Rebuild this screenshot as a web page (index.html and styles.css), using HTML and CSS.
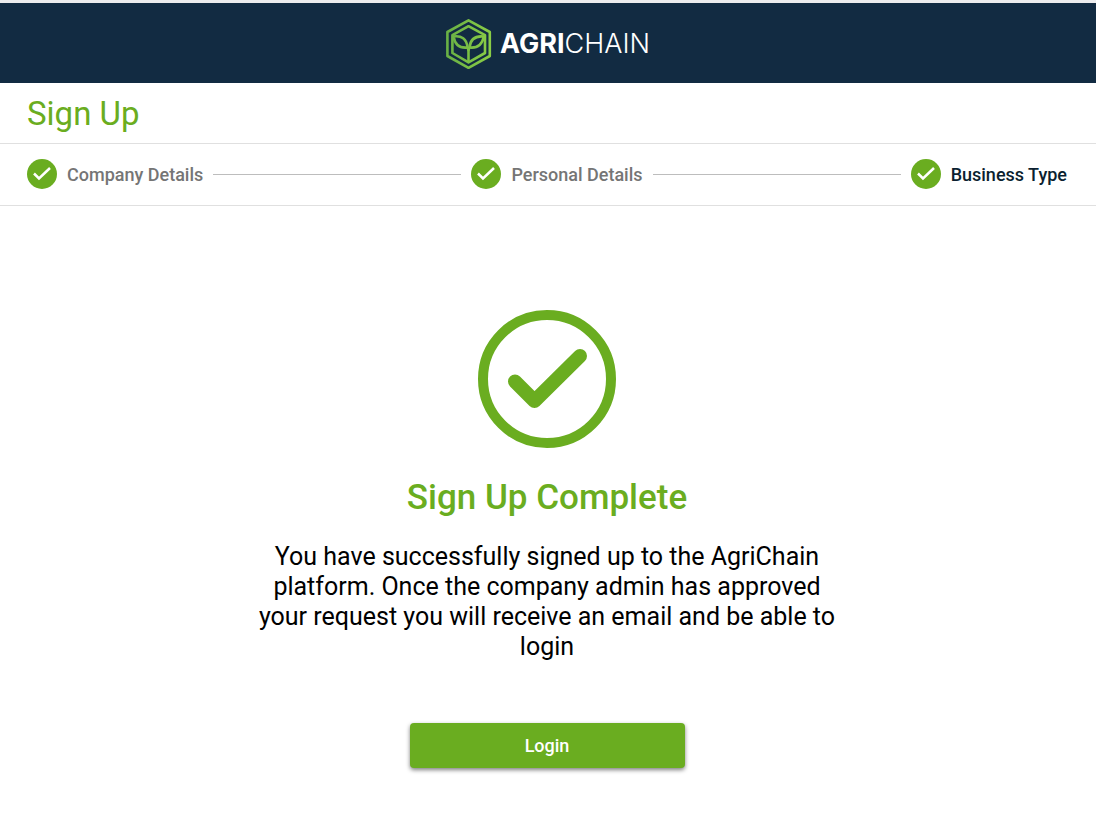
FILE: index.html
```html
<!DOCTYPE html>
<html lang="en">
  <head>
    <meta charset="utf-8" />
    <meta name="viewport" content="width=device-width,initial-scale=1" />
    <title>Sign Up</title>
    <link rel="stylesheet" href="styles.css">
  </head>
  <body>
    <header class="header">
      <svg class="logo-mark" viewBox="0 0 46 50" aria-hidden="true">
        <defs>
          <linearGradient id="leaf" gradientUnits="userSpaceOnUse" x1="0" y1="0" x2="46" y2="0">
            <stop offset="0" stop-color="#68b045" />
            <stop offset="1" stop-color="#8bce46" />
          </linearGradient>
        </defs>
        <g stroke="url(#leaf)">
          <path d="M22.5 1.4 43.8 13V37L22.5 48.8 1.4 37V13Z" />
          <path d="M22.5 7.2 39 16.2V34L22.5 43.4 6.4 34V16.2Z" />
          <path d="M7.5 17.5C15.5 16.5 20.5 19.5 21.6 28.5C13.5 29.5 9 26 7.5 17.5Z" />
          <path d="M37.9 17.5C29.5 16.5 24.5 19.5 23.4 28.5C31.5 29.5 36 26 37.9 17.5Z" />
          <path d="M21.6 28.5 22.5 31 23.4 28.5" />
        </g>
        <path class="stem" d="M22.5 29V43" />
      </svg>
      <span class="logo-text"><b>AGRI</b>CHAIN</span>
    </header>

    <h1 class="page-title">Sign Up</h1>

    <!-- Stepper -->
    <ol class="stepper">
      <li class="step">
        <svg class="step-icon" viewBox="0 0 30 30" aria-hidden="true">
          <circle cx="15" cy="15" r="15" />
          <path d="M7 14.5 12 19.5 23 9" />
        </svg>
        <span>Company Details</span>
      </li>
      <li class="step-line" role="presentation"></li>
      <li class="step">
        <svg class="step-icon" viewBox="0 0 30 30" aria-hidden="true">
          <circle cx="15" cy="15" r="15" />
          <path d="M7 14.5 12 19.5 23 9" />
        </svg>
        <span>Personal Details</span>
      </li>
      <li class="step-line" role="presentation"></li>
      <li class="step active" aria-current="step">
        <svg class="step-icon" viewBox="0 0 30 30" aria-hidden="true">
          <circle cx="15" cy="15" r="15" />
          <path d="M7 14.5 12 19.5 23 9" />
        </svg>
        <span>Business Type</span>
      </li>
    </ol>

    <main class="complete">
      <svg class="complete-icon" viewBox="0 0 138 138" aria-hidden="true">
        <circle cx="69" cy="69" r="64" stroke-width="10" />
        <path d="M37 71.5 56.5 91 102 46" stroke-width="14" />
      </svg>
      <h2 class="complete-title">Sign Up Complete</h2>
      <p class="complete-text">
        You have successfully signed up to the AgriChain platform. Once the company admin has approved your request you
        will receive an email and be able to login
      </p>
      <button type="button" class="login-button">Login</button>
    </main>
  </body>
</html>
```

FILE: styles.css
```css
* {
  box-sizing: border-box;
}
body {
  margin: 0;
  background: #fff;
  border-top: 3px solid #ececee;
  font-family: Roboto, "Liberation Sans", sans-serif;
  color: #000;
}
.header {
  display: flex;
  justify-content: center;
  align-items: center;
  gap: 8px;
  height: 80px;
  padding-top: 2px;
  background: #122b42;
}
.logo-mark {
  width: 46px;
  height: 50px;
  fill: none;
  stroke-width: 2.6;
  stroke-linejoin: round;
}
.stem {
  stroke: #7ac143;
}
.logo-text {
  font-family: Inter, Lato, sans-serif;
  font-size: 27px;
  font-weight: 300;
  line-height: 30px;
  color: #fff;
}
.logo-text b {
  font-weight: 700;
}
.page-title {
  margin: 0;
  padding: 11px 27px 9px;
  border-bottom: 1px solid #e0e0e0;
  font-size: 33px;
  font-weight: 400;
  line-height: 40px;
  color: #6aad20;
}
.stepper {
  display: flex;
  align-items: center;
  gap: 10px;
  margin: 0;
  padding: 15px 29px 16px 27px;
  border-bottom: 1px solid #e0e0e0;
  list-style: none;
}
.step {
  display: flex;
  align-items: center;
  gap: 10px;
  font-size: 18px;
  font-weight: 500;
  line-height: 30px;
  color: #757575;
}
.step span {
  padding-top: 1px;
  line-height: 29px;
}
.step.active {
  color: #0b1f30;
}
.step-icon {
  width: 30px;
  height: 30px;
  fill: #6aad20;
}
.step-icon path {
  fill: none;
  stroke: #fff;
  stroke-width: 2.5;
}
.step-line {
  flex: 1;
  border-top: 1px solid #bdbdbd;
}
.complete {
  display: flex;
  flex-direction: column;
  align-items: center;
  padding: 104px 29px 40px 27px;
  text-align: center;
}
.complete-icon {
  width: 138px;
  height: 138px;
  fill: none;
  stroke: #6aad20;
  stroke-linecap: round;
  stroke-linejoin: round;
}
.complete-title {
  margin: 30px 0 24px;
  font-size: 35px;
  font-weight: 500;
  line-height: 40px;
  color: #6aad20;
}
.complete-text {
  max-width: 600px;
  margin: 0 0 61px;
  font-size: 25px;
  line-height: 30px;
}
.login-button {
  width: 275px;
  height: 45px;
  border: 0;
  border-radius: 4px;
  background: #6aad20;
  box-shadow: 0 2px 4px rgba(0, 0, 0, 0.5);
  font-family: inherit;
  font-size: 18px;
  font-weight: 500;
  color: #fff;
  cursor: pointer;
}
```
